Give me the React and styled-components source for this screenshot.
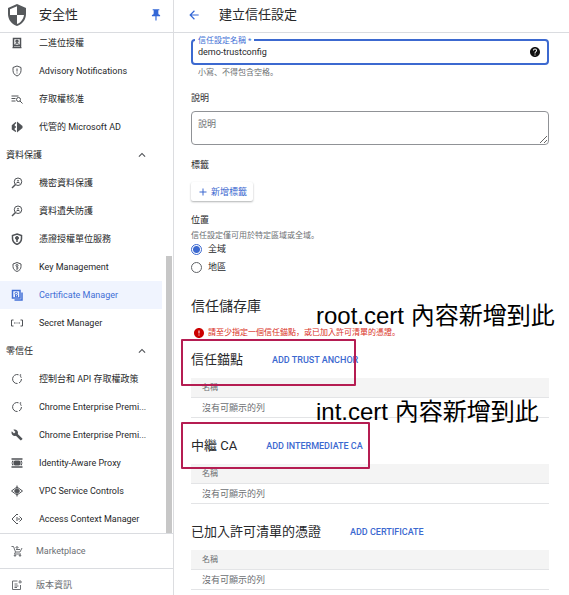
import React from "react";
import styled, { createGlobalStyle } from "styled-components";
import { MdArrowBack, MdAdd, MdBuild, MdError, MdExpandLess, MdHelp, MdPushPin } from "react-icons/md";

const GlobalStyle = createGlobalStyle`
  * { box-sizing: border-box; }
  body {
    margin: 0;
    background: #fff;
    color: #27282a;
    font-family: Roboto, "Noto Sans CJK JP", sans-serif;
    font-size: 9px;
    line-height: 12px;
  }
  button, input, textarea { font: inherit; color: inherit; }
  h1, h2, h3, p, ul { margin: 0; padding: 0; }
`;

const Page = styled.div`
  display: grid;
  grid-template-columns: 174px minmax(0, 1fr);
  grid-template-rows: minmax(0, 1fr);
  height: 100vh;
  overflow: hidden;
`;

const Sidebar = styled.aside`
  display: flex;
  flex-direction: column;
  min-height: 0;
  border-right: 1px solid #dcdde0;
`;

const Bar = styled.header`
  display: flex;
  align-items: center;
  flex: none;
  height: 33px;
  padding: 0 10px 2px ${(p) => (p.$main ? "13px" : "8px")};
  gap: ${(p) => (p.$main ? "18px" : "13px")};
  border-bottom: 1px solid #dadce0;
`;

const Title = styled.h1`
  flex: 1;
  font-size: 13px;
  line-height: 20px;
  font-weight: 400;
`;

const IconButton = styled.button`
  display: flex;
  padding: 0;
  border: 0;
  background: none;
  color: ${(p) => (p.$dark ? "#111" : "#3367d6")};
  font-size: ${(p) => (p.$large ? "14px" : "12px")};
`;

const Scroller = styled.nav`
  display: flex;
  align-items: flex-end;
  flex: 1;
  min-height: 0;
  overflow: hidden;
  border-bottom: 1px solid #dadce0;
`;

const NavList = styled.ul`
  flex: 1;
  min-width: 0;
  list-style: none;
`;

const Thumb = styled.div`
  width: 6px;
  height: 277px;
  margin: 0 1px 0 4px;
  background: #c7c7c7;
`;

const NavLink = styled.a`
  display: flex;
  align-items: center;
  gap: 16px;
  height: 28px;
  padding: 0 10px 0 11px;
  text-decoration: none;
  color: ${(p) => (p.$active ? "#426fd6" : "inherit")};
  background: ${(p) => (p.$active ? "#f0f4fe" : "transparent")};
  svg { flex: none; color: ${(p) => (p.$active ? "#426fd6" : "#505357")}; }
  span { white-space: nowrap; }
`;

const GroupButton = styled.button`
  display: flex;
  align-items: center;
  justify-content: space-between;
  width: 100%;
  height: 28px;
  padding: 0 13px 0 6px;
  border: 0;
  background: none;
  svg { font-size: 14px; color: #505357; }
`;

const FooterLink = styled.a`
  display: flex;
  align-items: center;
  flex: none;
  gap: 13px;
  height: ${(p) => (p.$last ? "26px" : "35px")};
  padding: ${(p) => (p.$last ? "6px" : "0")} 11px 0;
  border-bottom: ${(p) => (p.$last ? "0" : "1px solid #dadce0")};
  color: #6c6f73;
  text-decoration: none;
`;

const Main = styled.main`
  min-width: 0;
`;

const Form = styled.form`
  padding: 6px 20px 0 17px;
`;

const NameField = styled.div`
  position: relative;
  display: flex;
  align-items: center;
  height: 26px;
  padding: 0 6px 0 5px;
  border: 2px solid #3c69d0;
  border-radius: 4px;
`;

const FloatingLabel = styled.label`
  position: absolute;
  top: -5px;
  left: 2px;
  padding: 0 3px;
  background: #fff;
  color: #426fd6;
  font-size: 8px;
  line-height: 10px;
`;

const NameInput = styled.input`
  flex: 1;
  min-width: 0;
  padding: 0;
  border: 0;
  outline: 0;
  background: none;
`;

const Hint = styled.p`
  margin: ${(p) => p.$top} 0 0 ${(p) => (p.$indent ? "7px" : "0")};
  color: #6c6f73;
  font-size: 8px;
  line-height: 8px;
`;

const FieldLabel = styled.label`
  display: block;
  margin: 15px 0 7px;
`;

const GroupLabel = styled.h3`
  margin-top: ${(p) => p.$top};
  font-size: 9px;
  font-weight: 400;
`;

const Description = styled.textarea`
  display: block;
  width: 100%;
  height: 34px;
  padding: 6px;
  border: 1px solid #909296;
  border-radius: 4px;
  resize: vertical;
  &::placeholder { color: #6c6f73; opacity: 1; }
`;

const AddLabel = styled.button`
  display: flex;
  align-items: center;
  gap: 2px;
  height: 19px;
  margin: 11px 0 12px;
  padding: 0 6px;
  border: 0;
  border-radius: 2px;
  background: #fff;
  box-shadow: 0 1px 2px rgba(60, 64, 67, 0.4);
  color: #3c69d0;
  svg { font-size: 12px; }
`;

const RadioRow = styled.label`
  display: flex;
  align-items: center;
  gap: 6px;
  height: 18px;
`;

const Radio = styled.input`
  appearance: none;
  width: 11px;
  height: 11px;
  margin: 0;
  border: 1px solid #606367;
  border-radius: 50%;
  &:checked {
    border-color: #3c69d0;
    background: radial-gradient(circle, #3c69d0 0 3px, #fff 4px);
  }
`;

const StoreTitle = styled.h2`
  margin-top: 20px;
  font-size: 14px;
  line-height: 20px;
  font-weight: 400;
`;

const ErrorLine = styled.p`
  display: flex;
  align-items: center;
  gap: 3px;
  height: 12px;
  margin: 11px 0 3px 2px;
  color: #d93025;
  font-size: 8px;
  svg { flex: none; font-size: 12px; color: #cc0000; }
`;

const Section = styled.section`
  position: relative;
  margin-bottom: 10px;
`;

const SectionHead = styled.div`
  display: flex;
  align-items: center;
  gap: 29px;
  height: 36px;
`;

const SectionTitle = styled.h3`
  font-size: 13px;
  line-height: 20px;
  font-weight: 400;
`;

const TextButton = styled.button`
  padding: 0;
  border: 0;
  background: none;
  color: #3c69d0;
  font-weight: 500;
  white-space: nowrap;
`;

const Table = styled.table`
  width: 100%;
  border-collapse: separate;
  border-spacing: 0;
  th, td {
    height: 20px;
    padding: 0 11px;
    border-bottom: 1px solid #e3e4e6;
    color: #6c6f73;
    text-align: left;
    font-weight: 400;
  }
  th { background: #f4f4f4; font-size: 8px; }
`;

const Frame = styled.div`
  position: absolute;
  top: ${(p) => p.$top};
  left: -10px;
  width: ${(p) => p.$width};
  height: 47px;
  border: 2px solid #b51d52;
  border-radius: 1px;
  pointer-events: none;
`;

const Note = styled.div`
  position: absolute;
  top: ${(p) => p.$top};
  left: 125px;
  color: #000;
  font-family: "Liberation Sans", "Noto Sans CJK JP", sans-serif;
  font-size: 24px;
  line-height: 28px;
  white-space: nowrap;
  pointer-events: none;
`;

const Svg = styled.svg`
  flex: none;
  fill: none;
  stroke: currentColor;
  stroke-width: 2;
`;

const Shield = styled.svg`
  flex: none;
  fill: #56595c;
`;

const glyphs = {
  binary: <><path d="M5 3h14v14H5zM3 21h18" strokeWidth="3" /><circle cx="12" cy="8.5" r="2" strokeWidth="3" /><path d="M7 16c2-4 8-4 10 0M5 17v4M19 17v4" /></>,
  advisory: <><path d="M12 2l8 3v6c0 5-3 9-8 11-5-2-8-6-8-11V5z" /><path d="M12 7v6M12 15v2" /></>,
  approval: <><path d="M1 6h14M1 11h8M1 16h8" /><circle cx="15" cy="13" r="4" /><path d="M18 16l5 5" /></>,
  directory: <><path d="M12 1v22l11-9v-4z" fill="currentColor" stroke="none" /><path d="M10 3L3 9v3h7M10 21l-7-5v-3M6 7v10" strokeWidth="3" /></>,
  search: <><circle cx="14" cy="9.5" r="7.5" /><path d="M9 15l-7 7" strokeWidth="3" /><circle cx="14" cy="7.5" r="1" /><path d="M10 13c1-3 7-3 8 0" /></>,
  authority: <><path d="M12 2l9 3v6c0 5-3 9-9 12-6-3-9-7-9-12V5z" strokeWidth="3" /><circle cx="12" cy="10" r="3" fill="currentColor" /><path d="M12 12v6" strokeWidth="3" /></>,
  key: <><path d="M12 3l8 3v5c0 5-3 8-8 10-5-2-8-5-8-10V6z" /><circle cx="12" cy="9" r="2" /><path d="M12 11v7M12 14h3" /></>,
  certificate: <><path d="M3 3h15v15H3zM7 22h15V7" strokeWidth="3" /><circle cx="10.5" cy="9" r="2.5" /><path d="M9 12v4l2-1 2 1v-4" /></>,
  secret: <><path d="M5 6H1v12h4M19 6h4v12h-4" /><path d="M6 12h3M11 12h2M15 12h3" /></>,
  loop: <><path d="M13 21A9 9 0 1 1 15 3.5" /><path d="M18 5.5a9 9 0 0 1 2.5 4M21 12a9 9 0 0 1-5 8" /><circle cx="19" cy="4" r="1.5" fill="currentColor" stroke="none" /></>,
  proxy: <><path d="M1 4h22M1 20h22M2 9h3M2 15h3M19 9h3M19 15h3" strokeWidth="3" /><path d="M7 8h10v8H7z" fill="currentColor" /><path d="M1 12h22" /></>,
  vpc: <><path d="M12 4l11 8-11 8L1 12z" /><circle cx="12" cy="12" r="4" fill="currentColor" /><path d="M12 1v7M12 16v7M6 12h12" /></>,
  access: <><path d="M14 4l-2-2L2 12l10 10 2-2M17 7l5 5-5 5" /><path d="M12 8v8M16 10v4" /></>,
  market: <><path d="M1 3h4l4 11h9l4-8M9 14l-2 4h13" /><path d="M12 10V3M9 6l3-3 3 3M10 9h8" /><circle cx="8" cy="21" r="1.5" fill="currentColor" /><circle cx="18" cy="21" r="1.5" fill="currentColor" /></>,
  release: <><path d="M13 4H3v17h16v-9M7 10h6M7 14h8M7 17h5" /><path d="M18 2v7M15 6h7" /></>,
};

function Glyph({ name }) {
  return <Svg width="12" height="12" viewBox="0 0 24 24" aria-hidden="true">{glyphs[name]}</Svg>;
}

function NavItem({ icon, active, children }) {
  return (
    <li>
      <NavLink href="#" $active={active} aria-current={active ? "page" : undefined}>
        {icon === "wrench" ? <MdBuild size={12} /> : <Glyph name={icon} />}
        <span>{children}</span>
      </NavLink>
    </li>
  );
}

function NavGroup({ children }) {
  return <li><GroupButton type="button" aria-expanded="true">{children}<MdExpandLess /></GroupButton></li>;
}

function CertSection({ title, action, children }) {
  return (
    <Section>
      <SectionHead>
        <SectionTitle>{title}</SectionTitle>
        <TextButton type="button">{action}</TextButton>
      </SectionHead>
      <Table aria-label={title}>
        <thead><tr><th scope="col">名稱</th></tr></thead>
        <tbody><tr><td>沒有可顯示的列</td></tr></tbody>
      </Table>
      {children}
    </Section>
  );
}

export default function App() {
  return (
    <>
      <GlobalStyle />
      <Page>
        <Sidebar>
          <Bar>
            <Shield width="18" height="22" viewBox="3 1 18 22" aria-hidden="true">
              <path d="M12 1L3 5v6c0 5.55 3.84 10.74 9 12 5.16-1.26 9-6.45 9-12V5l-9-4zm0 10.99h7c-.53 4.12-3.28 7.79-7 8.94V12H5V6.3l7-3.11v8.8z" />
            </Shield>
            <Title as="h2">安全性</Title>
            <IconButton type="button" $large aria-label="固定"><MdPushPin /></IconButton>
          </Bar>
          <Scroller aria-label="安全性">
            <NavList>
              <NavItem icon="binary">二進位授權</NavItem>
              <NavItem icon="advisory">Advisory Notifications</NavItem>
              <NavItem icon="approval">存取權核准</NavItem>
              <NavItem icon="directory">代管的 Microsoft AD</NavItem>
              <NavGroup>資料保護</NavGroup>
              <NavItem icon="search">機密資料保護</NavItem>
              <NavItem icon="search">資料遺失防護</NavItem>
              <NavItem icon="authority">憑證授權單位服務</NavItem>
              <NavItem icon="key">Key Management</NavItem>
              <NavItem icon="certificate" active>Certificate Manager</NavItem>
              <NavItem icon="secret">Secret Manager</NavItem>
              <NavGroup>零信任</NavGroup>
              <NavItem icon="loop">控制台和 API 存取權政策</NavItem>
              <NavItem icon="loop">Chrome Enterprise Premi...</NavItem>
              <NavItem icon="wrench">Chrome Enterprise Premi...</NavItem>
              <NavItem icon="proxy">Identity-Aware Proxy</NavItem>
              <NavItem icon="vpc">VPC Service Controls</NavItem>
              <NavItem icon="access">Access Context Manager</NavItem>
            </NavList>
            <Thumb />
          </Scroller>
          <FooterLink href="#"><Glyph name="market" />Marketplace</FooterLink>
          <FooterLink href="#" $last><Glyph name="release" />版本資訊</FooterLink>
        </Sidebar>
        <Main>
          <Bar $main>
            <IconButton type="button" $large aria-label="返回"><MdArrowBack /></IconButton>
            <Title>建立信任設定</Title>
          </Bar>
          <Form>
            <NameField>
              <FloatingLabel htmlFor="config-name">信任設定名稱 *</FloatingLabel>
              <NameInput id="config-name" defaultValue="demo-trustconfig" autoFocus />
              <IconButton type="button" $dark aria-label="說明"><MdHelp /></IconButton>
            </NameField>
            <Hint $top="4px" $indent>小寫、不得包含空格。</Hint>
            <FieldLabel htmlFor="description">說明</FieldLabel>
            <Description id="description" placeholder="說明" />
            <GroupLabel $top="14px">標籤</GroupLabel>
            <AddLabel type="button"><MdAdd />新增標籤</AddLabel>
            <GroupLabel $top="13px">位置</GroupLabel>
            <Hint $top="6px">信任設定僅可用於特定區域或全域。</Hint>
            <RadioRow><Radio type="radio" name="location" defaultChecked />全域</RadioRow>
            <RadioRow><Radio type="radio" name="location" />地區</RadioRow>
            <StoreTitle>信任儲存庫</StoreTitle>
            <ErrorLine role="alert"><MdError />請至少指定一個信任錨點，或已加入許可清單的憑證。</ErrorLine>
            <CertSection title="信任錨點" action="ADD TRUST ANCHOR">
              <Frame $top="-3px" $width="175px" />
              <Note $top="-40px">root.cert 內容新增到此</Note>
            </CertSection>
            <CertSection title="中繼 CA" action="ADD INTERMEDIATE CA">
              <Frame $top="-6px" $width="189px" />
              <Note $top="-30px">int.cert 內容新增到此</Note>
            </CertSection>
            <CertSection title="已加入許可清單的憑證" action="ADD CERTIFICATE" />
          </Form>
        </Main>
      </Page>
    </>
  );
}
